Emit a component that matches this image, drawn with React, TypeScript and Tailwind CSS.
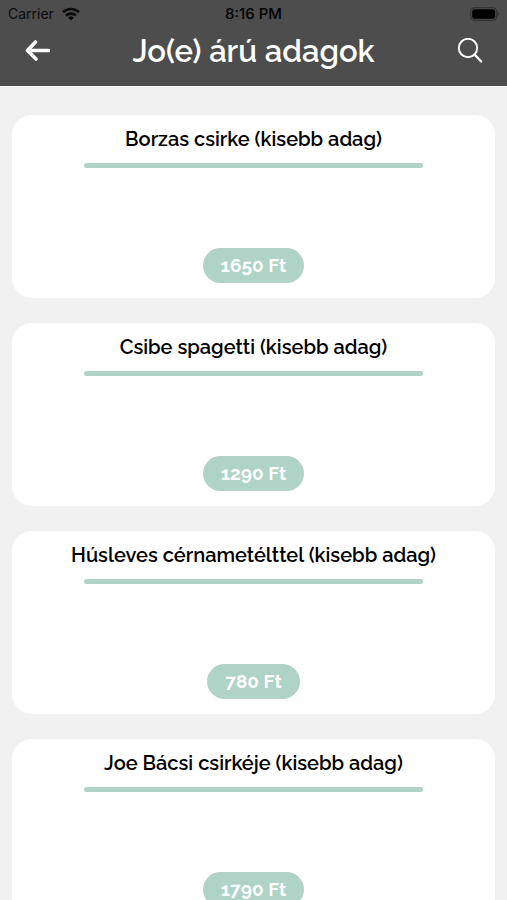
import React from 'react';

type Dish = {
    name: string;
    price: number;
};

const dishes: Dish[] = [
    {name: "Borzas csirke (kisebb adag)", price: 1650},
    {name: "Csibe spagetti (kisebb adag)", price: 1290},
    {name: "Húsleves cérnametélttel (kisebb adag)", price: 780},
    {name: "Joe Bácsi csirkéje (kisebb adag)", price: 1790},
];

const StatusBar = () => (
    <div className="grid grid-cols-3 items-center h-[27px] px-2 font-[Inter,sans-serif] text-sm text-black">
        <div className="flex items-center gap-2 opacity-85">
            <span>Carrier</span>
            <svg viewBox="0 0 18 14" className="w-[18px] h-[14px]" fill="none" stroke="currentColor" strokeWidth="2.6">
                <path d="M1 5.2a11.5 11.5 0 0 1 16 0"/>
                <path d="M4 8.6a7.2 7.2 0 0 1 10 0"/>
                <path d="M9 13.6l-2.8-2.9a4 4 0 0 1 5.6 0z" fill="currentColor" stroke="none"/>
            </svg>
        </div>
        <span className="text-center text-[15px] font-medium">8:16 PM</span>
        <svg viewBox="0 0 29 14" className="w-[29px] h-[14px] justify-self-end">
            <rect x="0.7" y="0.7" width="26" height="12.6" rx="3.8" fill="none" stroke="currentColor" strokeWidth="1.2" opacity="0.35"/>
            <rect x="2.2" y="2.2" width="23" height="9.6" rx="2.2" fill="currentColor"/>
            <path d="M27.6 5c1.6.6 1.6 3.4 0 4z" fill="currentColor" opacity="0.4"/>
        </svg>
    </div>
);

const Header = () => (
    <header className="bg-[#4d4d4d] border-b border-white">
        <StatusBar/>
        <div className="flex items-center justify-between h-[59px] px-6 pb-3 text-white">
            <button type="button" aria-label="Vissza">
                <svg viewBox="0 0 26 22" className="w-[26px] h-[22px]" fill="none" stroke="currentColor" strokeWidth="3.6" strokeLinecap="round" strokeLinejoin="round">
                    <path d="M11.5 2L3.500 10.500l8.500 8.500M4 10.500h20.500"/>
                </svg>
            </button>
            <h1 className="text-[31px] leading-9 font-semibold">Jo(e) árú adagok</h1>
            <button type="button" aria-label="Keresés">
                <svg viewBox="0 0 26 26" className="w-[26px] h-[26px]" fill="none" stroke="currentColor" strokeLinecap="round">
                    <circle cx="11" cy="10" r="9.2" strokeWidth="1.9"/>
                    <path d="M17.5 16.500l6.700 7" strokeWidth="2.4"/>
                </svg>
            </button>
        </div>
    </header>
);

const DishCard = ({name, price}: Dish) => (
    <li className="flex flex-col items-center h-[183px] pt-3 pb-[15px] bg-white rounded-[20px]">
        <h2 className="text-[20px] leading-6 font-semibold text-black">{name}</h2>
        <div className="w-[70%] h-[5px] mt-3 rounded-full bg-[#afd3c6]"/>
        <button type="button" className="h-[35px] px-[18px] mt-auto rounded-full bg-[#afd3c6] text-[19px] font-bold text-white">
            {price} Ft
        </button>
    </li>
);

const App = () => {
    return (
        <div className="h-screen overflow-hidden bg-[#f1f1f1] font-[Raleway,Lato,sans-serif]">
            <Header/>
            <ul className="flex flex-col gap-[25px] px-3 pt-7">
                {dishes.map((dish) => (
                    <DishCard key={dish.name} {...dish}/>
                ))}
            </ul>
        </div>
    );
};

export default App;
